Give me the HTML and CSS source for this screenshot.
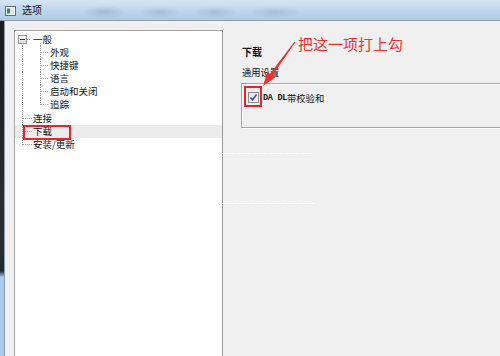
FILE: index.html
```html
<!DOCTYPE html>
<html lang="zh-CN">
<head>
  <meta charset="UTF-8">
  <title>选项</title>
  <link rel="stylesheet" href="styles.css">
</head>
<body>

<div class="window">
  <div class="titlebar">
    <svg class="app-icon" width="11" height="10" viewBox="0 0 11 10">
      <rect x="0.5" y="0.5" width="10" height="9" fill="#f4f6f8" stroke="#5f6f80"/>
      <rect x="2" y="2.5" width="3" height="5" fill="#2f8a5c"/>
      <rect x="5" y="2.5" width="4" height="5" fill="#d9e4ee"/>
    </svg>
    <span class="title">选项</span>
  </div>

  <div class="body">
    <div class="frame"></div>

    <div class="tree">
      <div class="row first"><span class="exp"></span>一般</div>
      <div class="row child">外观</div>
      <div class="row child">快捷键</div>
      <div class="row child">语言</div>
      <div class="row child">启动和关闭</div>
      <div class="row child lastchild">追踪</div>
      <div class="row top">连接</div>
      <div class="row top sel">下载</div>
      <div class="row top last">安装/更新</div>
    </div>

    <div class="page">
      <h2>下载</h2>
      <div class="group-label">通用设置</div>
      <div class="group">
        <label class="check">
          <span class="box">
            <svg width="9" height="9" viewBox="0 0 9 9"><path d="M1.5 4.5 L3.5 7 L7.5 1.5" fill="none" stroke="#2c4aa8" stroke-width="1.4"/></svg>
          </span>
          <span class="latin">DA DL</span>带校验和
        </label>
      </div>
    </div>
  </div>

  <!-- 标注 -->
  <div class="note">把这一项打上勾</div>
  <div class="mark mark-tree"></div>
  <div class="mark mark-check"></div>
  <svg class="arrow" width="500" height="356" viewBox="0 0 500 356">
    <polygon points="263,86 267.2,71.8 270,73.8 294.6,41.6 295.4,42.2 272.4,75.6 275.2,77.6" fill="#f0302e"/>
  </svg>
  <div class="glitch g1"></div>
  <div class="glitch g2"></div>
</div>

</body>
</html>
```

FILE: styles.css
```css
body {
  margin: 0;
  font-family: "Noto Sans CJK SC", "Noto Sans", sans-serif;
  color: #111;
}
.window {
  position: relative;
  width: 500px;
  height: 356px;
  overflow: hidden;
  display: flex;
  flex-direction: column;
  background: #f0f0f0;
}
.titlebar {
  height: 20px;
  flex: none;
  display: flex;
  align-items: center;
  padding-left: 5px;
  border-bottom: 1px solid #8d9cad;
  background:
    radial-gradient(ellipse 22px 6px at 105px 12px, rgba(90,110,140,0.25), transparent),
    radial-gradient(ellipse 20px 6px at 160px 12px, rgba(90,110,140,0.2), transparent),
    radial-gradient(ellipse 22px 6px at 215px 12px, rgba(90,110,140,0.2), transparent),
    radial-gradient(ellipse 26px 6px at 275px 12px, rgba(90,110,140,0.2), transparent),
    linear-gradient(to bottom, #d6e5f4, #bcd3ea 60%, #b0cae5);
}
.app-icon {
  margin-top: 2px;
}
.title {
  margin-left: 6px;
  font-size: 10px;
  line-height: 12px;
}
.body {
  flex: 1;
  display: flex;
  align-items: flex-start;
  padding-top: 9px;
  position: relative;
}
.frame {
  position: absolute;
  left: 0;
  top: 0;
  bottom: 0;
  width: 4px;
  border-right: 1px solid #8a9bb0;
  background: linear-gradient(to bottom, #1c1c1c 0, #2e2e2e 200px, #1e2a38 250px, #a9c9ec 256px, #a9c9ec);
}
.tree {
  margin-left: 14px;
  width: 209px;
  height: 340px;
  border: 1px solid #a4a4a4;
  border-right-color: #9a9a9a;
  background: #fff;
  padding-top: 1.5px;
  box-sizing: border-box;
  flex: none;
}
.row {
  height: 13.2px;
  line-height: 13.2px;
  font-size: 9.5px;
  display: flex;
  align-items: center;
  white-space: nowrap;
  --dots-v: repeating-linear-gradient(to bottom, #a0a0a0 0 1px, transparent 1px 2px);
  --dots-h: repeating-linear-gradient(to right, #a0a0a0 0 1px, transparent 1px 2px);
}
.row.first {
  padding-left: 3px;
  background:
    var(--dots-v) 7px 100% / 1px 3px no-repeat,
    var(--dots-v) 25px 100% / 1px 3px no-repeat,
    var(--dots-h) 12px 6px / 4px 1px no-repeat;
}
.exp {
  position: relative;
  width: 9px;
  height: 9px;
  box-sizing: border-box;
  border: 1px solid #949494;
  background: linear-gradient(to bottom, #fff, #dcdcdc);
  margin-right: 6px;
}
.exp::after {
  content: "";
  position: absolute;
  left: 1px;
  top: 3px;
  width: 5px;
  height: 1px;
  background: #2a3a60;
}
.row.child {
  padding-left: 35px;
  background:
    var(--dots-v) 7px 0 / 1px 100% no-repeat,
    var(--dots-v) 25px 0 / 1px 100% no-repeat,
    var(--dots-h) 26px 6px / 7px 1px no-repeat;
}
.row.child.lastchild {
  background:
    var(--dots-v) 7px 0 / 1px 100% no-repeat,
    var(--dots-v) 25px 0 / 1px 7px no-repeat,
    var(--dots-h) 26px 6px / 7px 1px no-repeat;
}
.row.top {
  padding-left: 18px;
  background:
    var(--dots-v) 7px 0 / 1px 100% no-repeat,
    var(--dots-h) 8px 6px / 9px 1px no-repeat;
}
.row.top.sel {
  background-color: #ececec;
}
.row.top.last {
  background:
    var(--dots-v) 7px 0 / 1px 7px no-repeat,
    var(--dots-h) 8px 6px / 9px 1px no-repeat;
}
.page {
  flex: 1;
  padding-left: 18px;
  margin-right: -30px;
}
.page h2 {
  margin: 15px 0 0;
  padding-left: 1px;
  font-size: 10px;
  line-height: 14px;
  font-weight: bold;
}
.group-label {
  margin-top: 7px;
  padding-left: 1px;
  font-size: 9.3px;
  line-height: 13px;
}
.group {
  margin-top: 4px;
  height: 45px;
  box-sizing: border-box;
  border: 1px solid #a6a6a6;
  box-shadow: inset 1px 1px #fff, 1px 1px #fff;
  padding: 8px 0 0 6px;
}
.check {
  display: flex;
  align-items: center;
  height: 11px;
  font-size: 9.3px;
}
.box {
  width: 11px;
  height: 11px;
  box-sizing: border-box;
  border: 1px solid #8e8f8f;
  background: linear-gradient(135deg, #dfe3e8, #f6f7f9);
  display: flex;
  align-items: center;
  justify-content: center;
  margin-right: 4px;
}
.latin {
  font-family: "Liberation Mono", monospace;
  font-size: 8.5px;
  font-weight: bold;
  letter-spacing: -0.3px;
}
.note {
  position: absolute;
  left: 298px;
  top: 35px;
  font-size: 15px;
  line-height: 18px;
  color: #f0302e;
}
.mark {
  position: absolute;
  border: 2px solid #e8232b;
}
.mark-tree {
  left: 23px;
  top: 125px;
  width: 44px;
  height: 11px;
}
.mark-check {
  left: 244px;
  top: 86px;
  width: 14px;
  height: 17px;
}
.arrow {
  position: absolute;
  left: 0;
  top: 0;
  pointer-events: none;
}
.glitch {
  position: absolute;
  left: 222px;
  height: 1px;
  background: repeating-linear-gradient(to right, #fff 0 14px, #f6f6f6 14px 16px);
}
.g1 {
  top: 153px;
  width: 90px;
}
.g2 {
  top: 203px;
  width: 92px;
}
```
